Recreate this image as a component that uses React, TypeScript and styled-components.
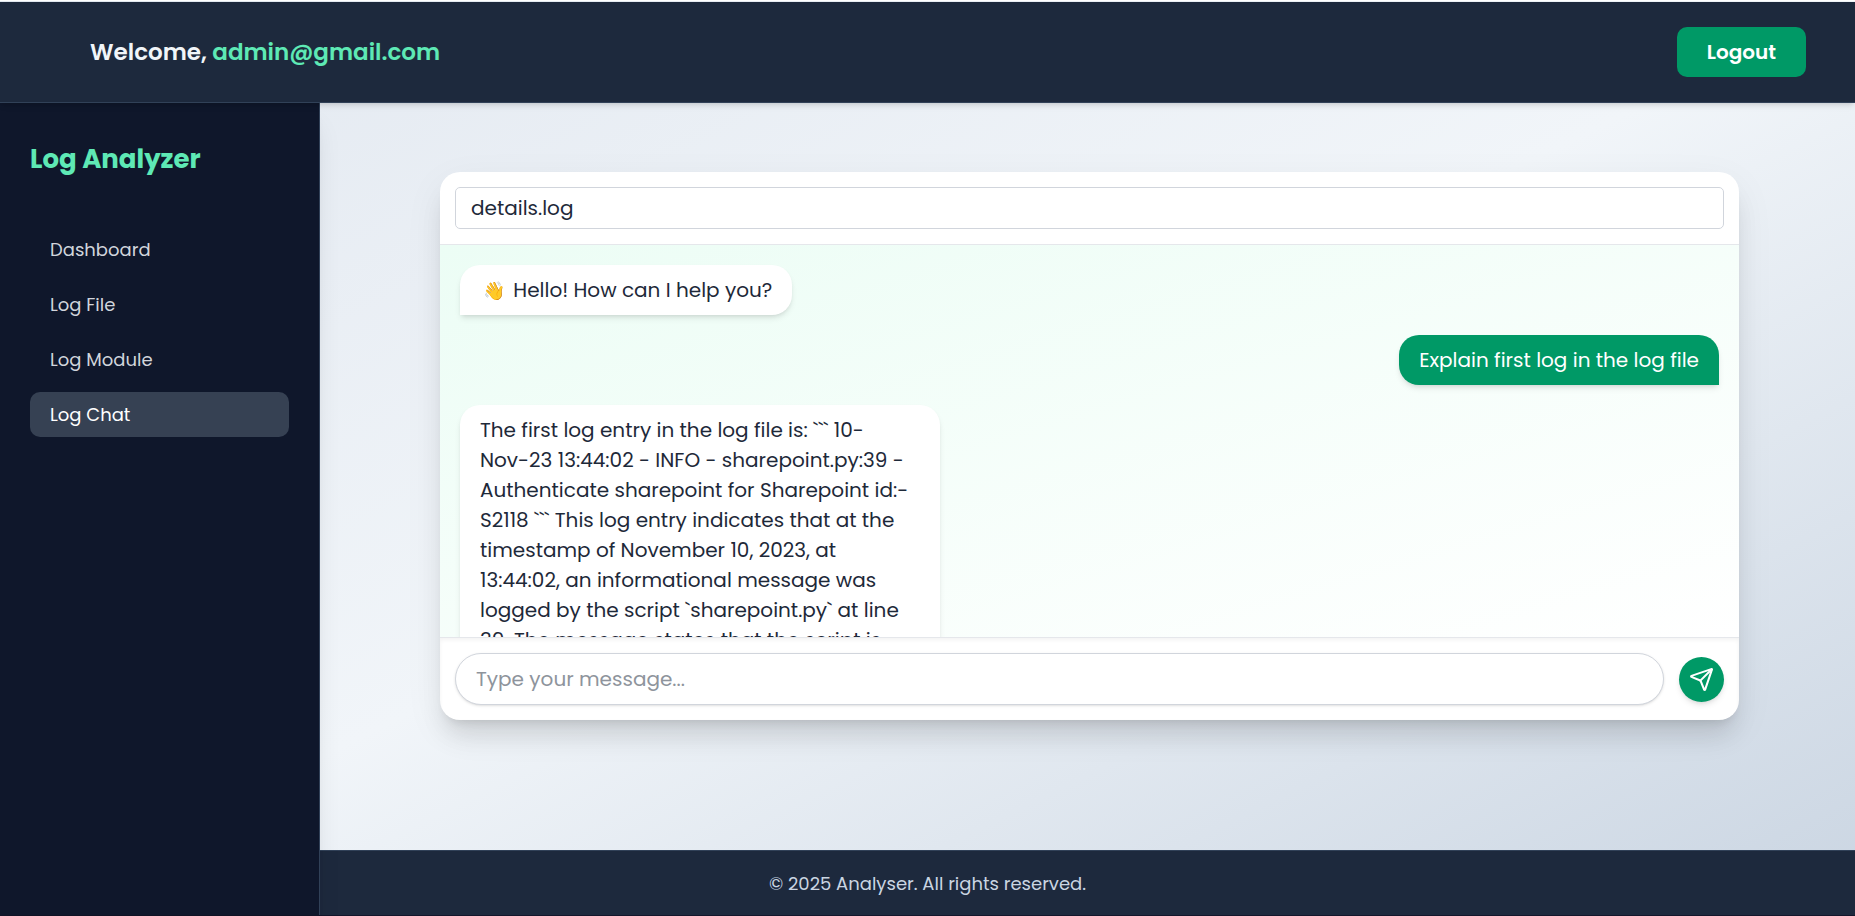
import React from "react";
import styled, { createGlobalStyle } from "styled-components";
import { Send } from "lucide-react";

const GlobalStyle = createGlobalStyle`
  *, *::before, *::after { box-sizing: border-box; }
  body {
    margin: 0;
    font-family: Poppins, Inter, "Noto Sans", sans-serif;
    font-size: 20px;
    line-height: 30px;
    color: #1e2939;
  }
  button, input { font: inherit; color: inherit; }
  h1, p, ul { margin: 0; padding: 0; }
`;

const Page = styled.div`
  display: grid;
  grid-template-columns: 320px 1fr;
  grid-template-rows: auto 1fr auto;
  height: 100vh;
  min-height: 640px;
  padding-top: 1px;
  border-top: 1px solid #ffffff;
  border-bottom: 1px solid #14162b;
  background: linear-gradient(to bottom right in oklab, #e2e8f0, #f1f5f9, #cad5e2);
`;

const Header = styled.header`
  grid-column: 1 / -1;
  grid-row: 1;
  z-index: 2;
  display: flex;
  align-items: center;
  justify-content: space-between;
  padding: 25px 49px 25px 90px;
  border-bottom: 1px solid #314158;
  background: #1d293d;
  box-shadow: 0 4px 6px -1px rgba(0, 0, 0, 0.1), 0 2px 4px -2px rgba(0, 0, 0, 0.1);
`;

const Welcome = styled.h1`
  font-size: 23px;
  font-weight: 600;
  line-height: 35px;
  color: #f1f5f9;
`;

const Email = styled.span`
  color: #5ee9b5;
`;

const LogoutButton = styled.button`
  padding: 10px 30px;
  border: 0;
  border-radius: 10px;
  background: #009966;
  color: #ffffff;
  font-weight: 600;
  cursor: pointer;
`;

const Sidebar = styled.aside`
  grid-column: 1;
  grid-row: 2 / 4;
  z-index: 1;
  padding: 39px 30px;
  border-right: 1px solid #314158;
  background: #0f172b;
  box-shadow: 0 20px 25px -5px rgba(0, 0, 0, 0.1), 0 8px 10px -6px rgba(0, 0, 0, 0.1);
`;

const Brand = styled.p`
  margin-bottom: 50px;
  color: #5ee9b5;
  font-size: 26px;
  font-weight: 700;
  line-height: 35px;
`;

const NavList = styled.ul`
  display: flex;
  flex-direction: column;
  gap: 10px;
  list-style: none;
`;

const NavLink = styled.a<{ $active?: boolean }>`
  display: block;
  padding: 10px 20px;
  border-radius: 10px;
  background: ${(p) => (p.$active ? "#364153" : "transparent")};
  color: ${(p) => (p.$active ? "#ffffff" : "#d1d5dc")};
  font-size: 18px;
  line-height: 25px;
  text-decoration: none;
`;

const Main = styled.main`
  grid-column: 2;
  grid-row: 2;
  display: flex;
  min-width: 0;
  min-height: 0;
  padding: 69px 116px 130px 120px;
`;

const ChatCard = styled.section`
  flex: 1;
  display: flex;
  flex-direction: column;
  min-width: 0;
  border-radius: 20px;
  overflow: hidden;
  background: #ffffff;
  box-shadow: 0 20px 25px -5px rgba(0, 0, 0, 0.1), 0 8px 10px -6px rgba(0, 0, 0, 0.1),
    0 12px 40px rgba(0, 0, 0, 0.06);
`;

const FileBar = styled.div`
  display: flex;
  padding: 15px;
  border-bottom: 1px solid #e5e7eb;
`;

const FileInput = styled.input`
  flex: 1;
  min-width: 0;
  height: 42px;
  padding: 5px 15px;
  border: 1px solid #d1d5dc;
  border-radius: 5px;
  background: #ffffff;
  outline: 0;
`;

const Messages = styled.div`
  flex: 1;
  display: flex;
  flex-direction: column;
  align-items: flex-start;
  gap: 20px;
  min-height: 0;
  padding: 20px;
  overflow-y: auto;
  scrollbar-width: none;
  background: linear-gradient(to bottom right in oklab, #ecfdf5, #ffffff);
`;

const Bubble = styled.p<{ $own?: boolean }>`
  flex-shrink: 0;
  align-self: ${(p) => (p.$own ? "flex-end" : "flex-start")};
  max-width: 480px;
  padding: 10px 20px;
  border-radius: ${(p) => (p.$own ? "20px 20px 0 20px" : "20px 20px 20px 0")};
  background: ${(p) => (p.$own ? "#009966" : "#ffffff")};
  color: ${(p) => (p.$own ? "#ffffff" : "#1e2939")};
  box-shadow: 0 4px 6px -1px rgba(0, 0, 0, 0.1), 0 2px 4px -2px rgba(0, 0, 0, 0.1);
`;

const Emoji = styled.span`
  display: inline-block;
  width: 28px;
  text-align: center;
  font-size: 18px;
  line-height: 20px;
`;

const LogDate = styled.span`
  white-space: nowrap;
`;

const Composer = styled.form`
  display: flex;
  align-items: center;
  gap: 15px;
  padding: 15px;
  border-top: 1px solid #e5e7eb;
  box-shadow: inset 0 2px 4px rgba(0, 0, 0, 0.05);
`;

const MessageInput = styled.input`
  flex: 1;
  min-width: 0;
  height: 52px;
  padding: 10px 20px;
  border: 1px solid #d1d5dc;
  border-radius: 26px;
  background: #ffffff;
  box-shadow: 0 1px 3px rgba(0, 0, 0, 0.1), 0 1px 2px -1px rgba(0, 0, 0, 0.1);
  outline: 0;

  &::placeholder {
    color: #8e949c;
    opacity: 1;
  }
`;

const SendButton = styled.button`
  display: grid;
  place-items: center;
  width: 45px;
  height: 45px;
  padding: 0;
  border: 0;
  border-radius: 50%;
  background: #009966;
  color: #ffffff;
  box-shadow: 0 4px 6px -1px rgba(0, 0, 0, 0.1), 0 2px 4px -2px rgba(0, 0, 0, 0.1);
  cursor: pointer;
`;

const Footer = styled.footer`
  grid-column: 1 / -1;
  grid-row: 3;
  padding: 20px 20px 19px;
  border-top: 1px solid #314158;
  background: #1d293d;
  color: #cad5e2;
  font-size: 18px;
  line-height: 25px;
  text-align: center;
`;

const links = ["Dashboard", "Log File", "Log Module", "Log Chat"];

export default function App() {
  return (
    <>
      <GlobalStyle />
      <Page>
        <Header>
          <Welcome>
            Welcome, <Email>admin@gmail.com</Email>
          </Welcome>
          <LogoutButton type="button">Logout</LogoutButton>
        </Header>
        <Sidebar>
          <Brand>Log Analyzer</Brand>
          <nav>
            <NavList>
              {links.map((label) => (
                <li key={label}>
                  <NavLink href="#" $active={label === "Log Chat"}>
                    {label}
                  </NavLink>
                </li>
              ))}
            </NavList>
          </nav>
        </Sidebar>
        <Main>
          <ChatCard>
            <FileBar>
              <FileInput aria-label="Log file" defaultValue="details.log" />
            </FileBar>
            <Messages>
              <Bubble>
                <Emoji>👋</Emoji> Hello! How can I help you?
              </Bubble>
              <Bubble $own>Explain first log in the log file</Bubble>
              <Bubble>
                The first log entry in the log file is: ``` 10-<LogDate>Nov-23</LogDate> 13:44:02 -
                INFO - sharepoint.py:39 - Authenticate sharepoint for Sharepoint id:-S2118 ``` This
                log entry indicates that at the timestamp of November 10, 2023, at 13:44:02, an
                informational message was logged by the script `sharepoint.py` at line 39. The
                message states that the script is
              </Bubble>
            </Messages>
            <Composer onSubmit={(e) => e.preventDefault()}>
              <MessageInput aria-label="Message" placeholder="Type your message..." />
              <SendButton type="submit" aria-label="Send">
                <Send size={25} strokeWidth={2} />
              </SendButton>
            </Composer>
          </ChatCard>
        </Main>
        <Footer>© 2025 Analyser. All rights reserved.</Footer>
      </Page>
    </>
  );
}
